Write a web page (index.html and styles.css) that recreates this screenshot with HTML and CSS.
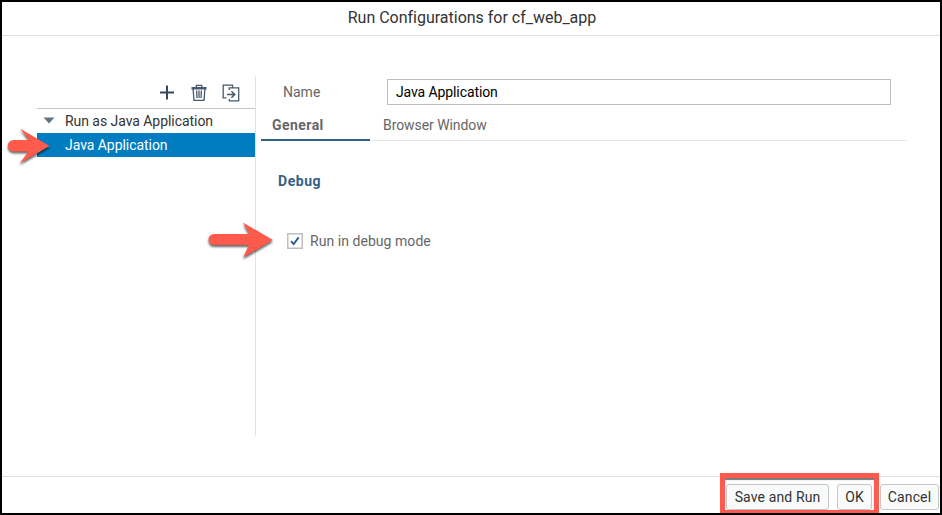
FILE: index.html
```html
<!DOCTYPE html>
<html lang="en">
<head>
<meta charset="utf-8">
<title>Run Configurations</title>
<link rel="stylesheet" href="styles.css">
</head>
<body>
<div class="dialog">
  <header class="header"><span class="title">Run Configurations for cf_web_app</span></header>
  <main class="body">
    <aside class="sidebar">
      <div class="toolbar">
        <svg width="16" height="18" viewBox="0 0 16 18"><path d="M7 1.500v14M0 8.500h14" fill="none" stroke="#34495e" stroke-width="2"/></svg>
        <svg width="16" height="18" viewBox="0 0 16 18" fill="none" stroke="#465a6c" stroke-width="1.3"><path d="M.5 3.7h15M5.3 3V1.3h5.4V3M2 4l1 12.4h10l1-12.4M.5 4.8h15"/><path d="M5.6 6.5l.4 7.5M8 6.5V14M10.4 6.5L10 14"/></svg>
        <svg width="18" height="18" viewBox="0 0 18 18" fill="none" stroke="#465a6c" stroke-width="1.3"><path d="M4.500 13.800H1.200V1.200h9.300v2M7.300 6V3.800h9.400v13H7.300V15"/><path d="M5 10.500h7.500M9.400 7.200l3.300 3.300-3.300 3.300" stroke-width="1.6"/></svg>
      </div>
      <div class="row parent"><svg class="caret" width="12" height="7" viewBox="0 0 12 7"><path d="M.5.5h11L6 6.5z" fill="#607580"/></svg><span>Run as Java Application</span></div>
      <div class="row selected"><span>Java Application</span></div>
    </aside>
    <section class="content">
      <div class="field"><label class="label" for="name">Name</label><input id="name" class="input" value="Java Application"></div>
      <nav class="tabs">
        <div class="tab active"><span>General</span></div>
        <div class="tab"><span>Browser Window</span></div>
      </nav>
      <h2 class="section-title">Debug</h2>
      <div class="option">
        <span class="checkbox"><svg width="10" height="10" viewBox="0 0 10 10"><path d="M1 5.2l2.7 2.9L8.6 1.4" fill="none" stroke="#27598c" stroke-width="1.8"/></svg></span>
        <span class="option-text">Run in debug mode</span>
      </div>
    </section>
  </main>
  <footer class="footer">
    <button class="button save">Save and Run</button>
    <button class="button ok">OK</button>
    <button class="button cancel">Cancel</button>
  </footer>
  <div class="highlight"></div>
  <svg class="arrow arrow-item" width="46" height="42" viewBox="0 0 46 42"><path d="M6.500 12h15.500L13 .5 42.500 18 12.500 35.500l9-12H6.500a5.700 5.700 0 0 1 0-11.500z" fill="#ff5a4c"/></svg>
  <svg class="arrow arrow-option" width="72" height="44" viewBox="0 0 72 44"><path d="M8 13h35L37 1.500 67 19 37 36.500l6-12.500H8a5.500 5.500 0 0 1 0-11z" fill="#ff5a4c"/></svg>
</div>
</body>
</html>
```
FILE: styles.css
```css
* { box-sizing: border-box; }
body { margin: 0; font-family: Roboto, "Liberation Sans", sans-serif; font-size: 14px; color: #333; }
.dialog { position: relative; display: flex; flex-direction: column; width: 942px; height: 515px; border: 2px solid #000; background: #fff; overflow: hidden; }
.header { height: 34px; border-bottom: 1px solid #ddd; text-align: center; line-height: 32px; font-size: 16px; padding-left: 2px; }
.title { letter-spacing: -0.01px; }
.body { flex: 1; display: flex; padding: 40px 33px 40px 35px; }
.sidebar { width: 219px; height: 360px; border-right: 1px solid #e2e2e6; }
.toolbar { display: flex; justify-content: flex-end; align-items: center; gap: 15px; height: 33px; padding: 1px 15px 0 0; border-bottom: 1px solid #c6c6c6; }
.row { display: flex; align-items: center; height: 24px; padding-left: 28px; white-space: nowrap; letter-spacing: -0.05px; }
.parent { padding-left: 6px; }
.caret { margin: 0 10px 1px 0; }
.selected { background: #007cc0; color: #fff; }
.content { flex: 1; padding-left: 5px; }
.field { display: flex; align-items: center; padding-top: 3px; }
.label { width: 126px; padding-left: 22px; color: #666; }
.input { width: 504px; height: 26px; border: 1px solid #bfbfbf; padding: 0 8px; font: inherit; letter-spacing: -0.1px; color: #000; outline: 0; }
.tabs { display: flex; height: 36px; box-shadow: inset 0 -1px #e5e5e5; color: #666; }
.tab { padding-left: 12px; line-height: 41px; letter-spacing: -0.07px; }
.active { width: 109px; padding-left: 11px; margin-right: 1px; font-weight: 700; letter-spacing: 0.45px; border-bottom: 2px solid #346187; }
.section-title { margin: 31px 0 0 17px; font-size: 14px; line-height: 18px; letter-spacing: 0.55px; color: #346187; }
.option { display: flex; align-items: center; margin: 42px 0 0 26px; height: 18px; letter-spacing: 0.05px; color: #666; }
.checkbox { display: flex; align-items: center; justify-content: center; width: 16px; height: 16px; border: 1px solid #bfbfbf; box-shadow: inset 0 0 0 .5px #bfbfbf; margin-right: 7px; }
.footer { display: flex; justify-content: flex-end; align-items: flex-start; height: 37px; padding: 7px 1px 0 0; border-top: 1px solid #ddd; }
.button { height: 26px; padding: 0; border: 1px solid #c5c5c5; border-radius: 3px; background: #f9fafa; font: inherit; letter-spacing: 0.12px; color: #333; }
.save { width: 103px; margin-right: 8px; }
.ok { width: 35px; margin-right: 8px; }
.cancel { width: 59px; }
.highlight { position: absolute; left: 718px; top: 471px; width: 159px; height: 42px; border: 5px solid #ff5a4c; box-shadow: inset 0 2px 1px #777; }
.arrow { position: absolute; filter: drop-shadow(0 2px 1px rgba(0, 0, 0, .6)); }
.arrow-item { left: 5px; top: 126px; }
.arrow-option { left: 204px; top: 219px; }
```
